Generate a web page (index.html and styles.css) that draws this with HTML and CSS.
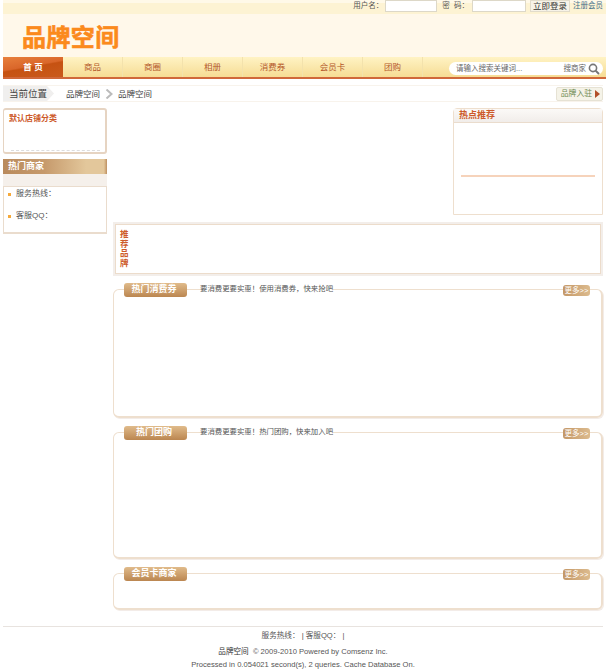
FILE: index.html
```html
<!DOCTYPE html>
<html lang="zh-CN">
<head>
    <meta charset="UTF-8">
    <title>品牌空间</title>
    <link rel="stylesheet" href="styles.css">
</head>
<body>

<div class="header">
    <div class="toplogin">
        <span>用户名：</span>
        <input class="px" type="text">
        <span class="pwd">密&nbsp;&nbsp;码：</span>
        <input class="px px-pwd" type="text">
        <button class="loginbtn" type="button">立即登录</button>
        <a class="reg" href="#">注册会员</a>
    </div>
    <div class="logo">品牌空间</div>
</div>

<div class="nav">
    <ul>
        <li class="current"><a href="#">首 页</a></li>
        <li><a href="#">商品</a></li>
        <li><a href="#">商圈</a></li>
        <li><a href="#">相册</a></li>
        <li><a href="#">消费券</a></li>
        <li><a href="#">会员卡</a></li>
        <li><a href="#">团购</a></li>
    </ul>
    <div class="search">
        <span class="search-tip">请输入搜索关键词...</span>
        <span class="search-btn">搜商家
            <svg width="12" height="12" viewBox="0 0 12 12"><circle cx="5" cy="5" r="3.6" fill="none" stroke="#777" stroke-width="1.6"/><path d="M7.6 7.6L11 11" stroke="#777" stroke-width="2"/></svg>
        </span>
    </div>
</div>

<div class="crumb">
    <span class="crumb-here">当前位置</span>
    <a href="#">品牌空间</a>
    <svg class="crumb-arr" width="9" height="10" viewBox="0 0 9 10"><path d="M1.5 0.5L6.5 5L1.5 9.5" fill="none" stroke="#bbb" stroke-width="2"/></svg>
    <a href="#">品牌空间</a>
    <a class="join" href="#">品牌入驻<i></i></a>
</div>

<div class="wrap">
    <div class="side">
        <div class="catbox">
            <h3>默认店铺分类</h3>
        </div>
        <h3 class="side-title">热门商家</h3>
        <div class="side-band"></div>
        <ul class="contact">
            <li>服务热线：</li>
            <li>客服QQ：</li>
        </ul>
    </div>

    <div class="main">
        <div class="toprow">
            <div class="hot">
                <h3>热点推荐</h3>
                <div class="hot-line"></div>
            </div>
        </div>

        <div class="recommend">
            <div class="recommend-in"><h3>推荐品牌</h3></div>
        </div>

        <div class="sec sec-coupon">
            <div class="sec-head">
                <h3>热门消费券</h3>
                <p>要消费更要实惠！使用消费券，快来抢吧</p>
                <a class="more" href="#">更多&gt;&gt;</a>
            </div>
        </div>

        <div class="sec sec-group">
            <div class="sec-head">
                <h3>热门团购</h3>
                <p>要消费更要实惠！热门团购，快来加入吧</p>
                <a class="more" href="#">更多&gt;&gt;</a>
            </div>
        </div>

        <div class="sec sec-card">
            <div class="sec-head">
                <h3>会员卡商家</h3>
                <a class="more" href="#">更多&gt;&gt;</a>
            </div>
        </div>
    </div>
</div>

<div class="footer">
    <p class="foot-tel">服务热线： | 客服QQ： |</p>
    <p class="foot-copy"><b>品牌空间</b> &nbsp;© 2009-2010 Powered by Comsenz Inc.</p>
    <p class="foot-debug">Processed in 0.054021 second(s), 2 queries. Cache Database On.</p>
</div>

</body>
</html>
```

FILE: styles.css
```css
body,h3,p,ul,li{margin:0;padding:0}
ul{list-style:none}
a{text-decoration:none;color:inherit}
body{
    font:8.5px/12px "Liberation Sans","Noto Sans CJK SC",sans-serif;
    color:#555;
    background:#fff;
    width:606px;
    overflow-x:hidden;
}
.header{
    height:57px;
    background:#fff8ea;
    margin-left:3px;
}
.toplogin{
    height:12px;
    background:linear-gradient(#fff9e8 0,#fff9e8 3px,#fdf3d3 3px);
    display:flex;
    align-items:center;
    justify-content:flex-end;
    padding:0 3px 2px 0;
    color:#555;
    font-size:7.5px;
}
.px{
    width:50px;
    height:10px;
    padding:0;
    margin:0 0 0 2px;
    border:1px solid #ddd8c8;
    background:#fff;
}
.px-pwd{width:52px;margin-left:3px}
.pwd{margin-left:5px}
.loginbtn{
    width:40px;
    height:12px;
    margin-left:4px;
    padding:0;
    border:1px solid #e2dccb;
    background:#f7f3e8;
    font:8.5px/10px "Liberation Sans","Noto Sans CJK SC",sans-serif;
    color:#333;
}
.reg{margin-left:3px;color:#47708a}
.logo{
    margin:9px 0 0 19px;
    font:bold 24px/26px "Noto Sans CJK SC",sans-serif;
    letter-spacing:0.4px;
    color:#fb8a1c;
    -webkit-text-stroke:0.6px #fb8a1c;
}
.nav{
    height:22px;
    box-sizing:border-box;
    margin-left:3px;
    border-bottom:2px solid #d0683a;
    background:linear-gradient(#fff3c4,#f6dc94);
    display:flex;
    justify-content:space-between;
}
.nav ul{display:flex}
.nav li{
    width:60px;
    text-align:center;
    line-height:20px;
    color:#b4582a;
    border-right:1px solid #f3e2ac;
    box-sizing:border-box;
}
.nav li.current{
    border-right:0;
    background:linear-gradient(170deg,#e8803c 0,#d9662a 45%,#c65212 50%,#c95a1c 100%);
    color:#fff;
    font-weight:bold;
}
.search{
    width:154px;
    height:13px;
    margin:5px 3px 0 0;
    padding:0 3px 0 7px;
    box-sizing:border-box;
    background:#fff;
    border-radius:7px;
    display:flex;
    justify-content:space-between;
    align-items:center;
    color:#666;
    font-size:7.5px;
}
.search-btn{display:flex;align-items:center;gap:2px}
.crumb{
    height:15px;
    margin:6px 3px 0 3px;
    border:1px solid #f8f3ec;
    border-width:1px 0;
    display:flex;
    align-items:center;
    color:#444;
}
.crumb-here{
    width:51px;
    height:15px;
    box-sizing:border-box;
    padding-left:6px;
    margin-right:12px;
    line-height:15px;
    font-size:9.5px;
    background:#f0efee;
    clip-path:polygon(0 0,44px 0,100% 50%,44px 100%,0 100%);
    color:#444;
    white-space:nowrap;
}
.crumb-arr{margin:0 4px 0 5px}
.join{
    margin-left:auto;
    width:47px;
    height:14px;
    box-sizing:border-box;
    border:1px solid #e6e2d4;
    border-radius:2px;
    background:#f5f3e8;
    display:flex;
    align-items:center;
    justify-content:flex-end;
    gap:3px;
    padding-right:2px;
    color:#6f8a52;
    font-size:7.8px;
}
.join i{
    border:4px solid transparent;
    border-left:5px solid #b2502a;
    border-right:0;
}
.wrap{
    display:flex;
    gap:6px;
    margin:6px 3px 0 3px;
}
.side{width:104px;flex:none}
.catbox{
    height:46px;
    box-sizing:border-box;
    border:1px solid #e6d4c2;
    border-width:2px 2px 2px 1px;
    border-radius:3px;
    padding:3px 5px;
    position:relative;
}
.catbox h3,.hot h3,.recommend h3{
    font-size:8px;
    font-weight:bold;
    color:#cd5a2a;
}
.catbox:after{
    content:"";
    position:absolute;
    left:7px;
    right:5px;
    bottom:1px;
    border-bottom:1px dashed #ddd;
}
.side-title{
    height:15px;
    margin-top:5px;
    padding-left:5px;
    line-height:15px;
    font-size:9px;
    color:#fff;
    background:linear-gradient(90deg,#b98a5c 0,#c69a6c 40%,#e3c79b 80%,#e3c79b 97%,#bd8f60 100%);
}
.side-band{
    height:12px;
    background:#f5f0eb;
}
.contact{
    height:48px;
    box-sizing:border-box;
    padding-top:1px;
    border:1px solid #eadccd;
    border-bottom-width:2px;
    font-size:8px;
}
.contact li{
    height:22px;
    line-height:12px;
    padding-left:12px;
    color:#555;
    position:relative;
}
.contact li:before{
    content:"";
    position:absolute;
    left:4px;
    top:5px;
    width:3px;
    height:3px;
    background:#f6a93a;
}
.main{flex:1;min-width:0}
.toprow{
    display:flex;
    justify-content:flex-end;
}
.hot{
    width:150px;
    height:107px;
    box-sizing:border-box;
    border:1px solid #eedfce;
    border-radius:4px 4px 0 0;
}
.hot h3{
    height:14px;
    line-height:13px;
    padding-left:5px;
    font-size:9px;
    border-bottom:1px solid #eadccd;
    box-sizing:border-box;
    background:linear-gradient(#fbf9f7,#f1edea);
}
.hot-line{
    height:2px;
    margin:52px 7px 0;
    background:#f6d3bb;
}
.recommend{
    height:54px;
    margin-top:7px;
    box-sizing:border-box;
    border:2px solid #f3eeea;
}
.recommend-in{
    height:50px;
    box-sizing:border-box;
    border:1px solid #ecdccb;
    padding:5px 0 0 4px;
}
.recommend h3{
    width:9px;
    line-height:9.6px;
    font-size:8.5px;
}
.sec{
    margin-top:13px;
    box-sizing:border-box;
    border:1px solid #eedfce;
    border-width:1px 2px 2px 1px;
    border-radius:6px;
    box-shadow:1px 1px 0 #f3ece8;
}
.sec-coupon{height:129px}
.sec-group{height:127px;margin-top:14px}
.sec-card{height:37px;margin-top:14px}
.sec-head{
    display:flex;
    align-items:center;
    height:14px;
    margin:-7px 11px 0 10px;
}
.sec-head h3{
    width:63px;
    height:14px;
    box-sizing:border-box;
    padding-right:3px;
    line-height:13px;
    margin-right:13px;
    text-align:center;
    font-size:9px;
    color:#fff;
    border-radius:3px;
    background:linear-gradient(#e0bb8b,#bb8650);
}
.sec-head p{
    background:#fff;
    color:#555;
    margin-top:-3px;
    font-size:7.4px;
}
.more{
    margin-left:auto;
    width:27px;
    height:11px;
    line-height:11px;
    text-align:center;
    font-size:7.5px;
    color:#fff;
    border-radius:3px;
    background:linear-gradient(90deg,#c49766,#dcbb8e);
}
.footer{
    margin:16px 3px 0 3px;
    padding-top:3px;
    border-top:1px solid #e8e3df;
    text-align:center;
    color:#555;
    font-size:7.6px;
}
.foot-tel{line-height:12px}
.foot-copy{margin-top:3px;line-height:13px}
.foot-copy b{font-weight:normal;color:#333}
.foot-debug{line-height:13px}
```
